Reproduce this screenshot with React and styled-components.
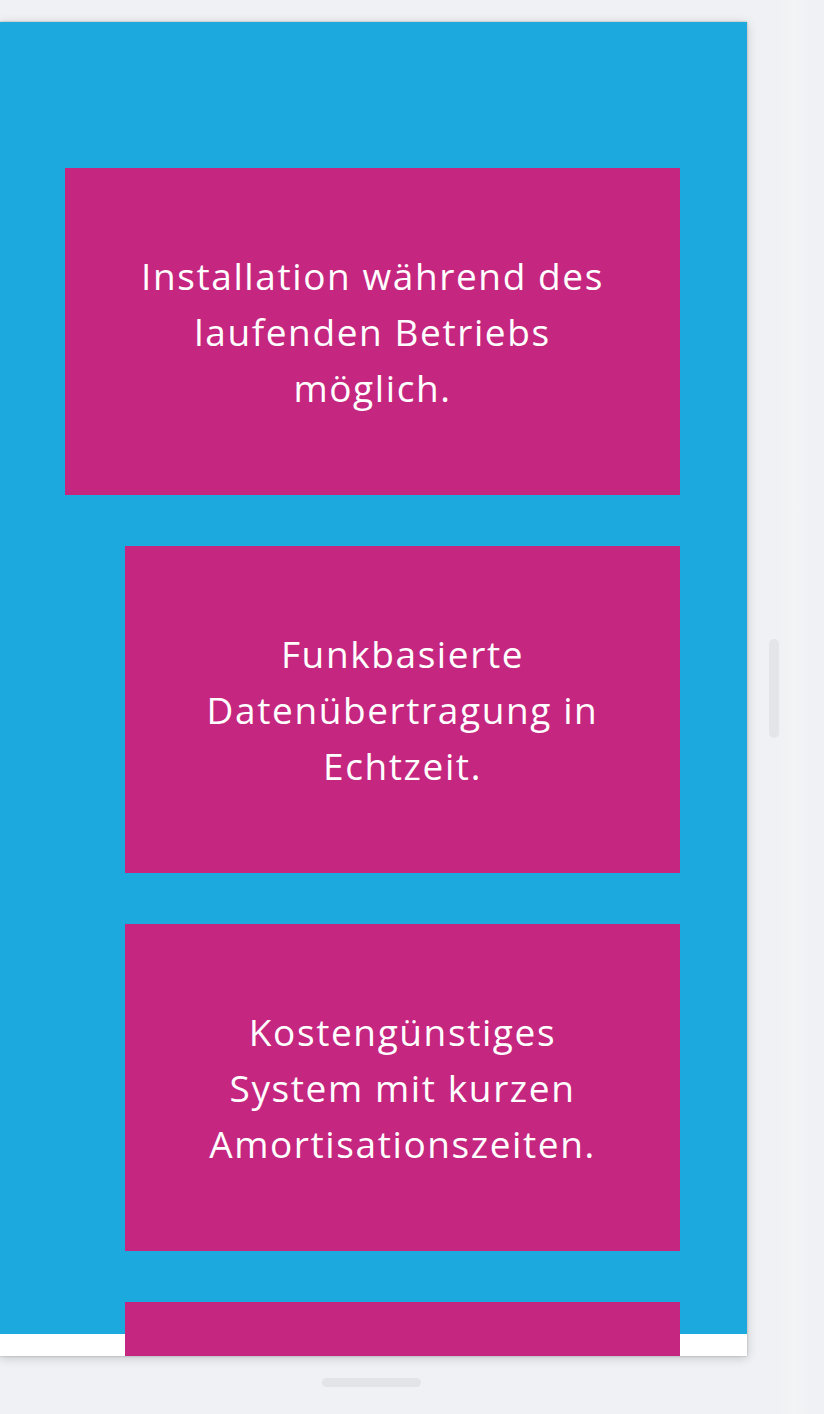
import React from 'react';
import styled, { createGlobalStyle } from 'styled-components';

const GlobalStyle = createGlobalStyle`
  html, body {
    margin: 0;
    padding: 0;
    background: #eff1f4;
  }
  body {
    font-family: 'Open Sans', 'Liberation Sans', sans-serif;
  }
`;

const Screen = styled.div`
  position: relative;
  width: 824px;
  height: 1414px;
  overflow: hidden;
  background: linear-gradient(90deg, #eff1f4 0, #eff1f4 780px, #f2f4f6 795px, #eff1f4 810px);
`;

const Sheet = styled.div`
  margin-top: 22px;
  width: 747px;
  height: 1334px;
  background: #fff;
  overflow: hidden;
  box-shadow: 0 0 2px rgba(0, 0, 0, 0.25), 0 2px 10px rgba(0, 0, 0, 0.18);
`;

const Section = styled.section`
  height: 1312px;
  background: #1ca9de;
  padding-top: 146px;
  box-sizing: border-box;
  display: flex;
  flex-direction: column;
  gap: 51px;
`;

const Card = styled.div`
  box-sizing: border-box;
  flex: none;
  height: 327px;
  margin-left: ${p => (p.$wide ? '65px' : '125px')};
  margin-right: 67px;
  background: #c52680;
  display: flex;
  flex-direction: column;
  align-items: center;
  justify-content: center;
  text-align: center;
  color: #fff;
  font-size: 37px;
  line-height: 56px;
  font-weight: 400;
  letter-spacing: 1.6px;
`;

const Line = styled.span`
  display: block;
  white-space: nowrap;
`;

const Scrollbar = styled.div`
  position: absolute;
  left: 769px;
  top: 639px;
  width: 10px;
  height: 99px;
  border-radius: 5px;
  background: #e3e5e9;
`;

const HomeBar = styled.div`
  position: absolute;
  left: 322px;
  top: 1378px;
  width: 99px;
  height: 9px;
  border-radius: 5px;
  background: #e2e4e8;
`;

const features = [
  { lines: ['Installation während des', 'laufenden Betriebs', 'möglich.'], wide: true },
  { lines: ['Funkbasierte', 'Datenübertragung in', 'Echtzeit.'] },
  { lines: ['Kostengünstiges', 'System mit kurzen', 'Amortisationszeiten.'] },
  { lines: [] },
];

export default function App() {
  return (
    <>
      <GlobalStyle />
      <Screen>
        <Sheet>
          <Section>
            {features.map((f, i) => (
              <Card key={i} $wide={f.wide}>
                {f.lines.map(l => <Line key={l}>{l}</Line>)}
              </Card>
            ))}
          </Section>
        </Sheet>
        <Scrollbar />
        <HomeBar />
      </Screen>
    </>
  );
}
